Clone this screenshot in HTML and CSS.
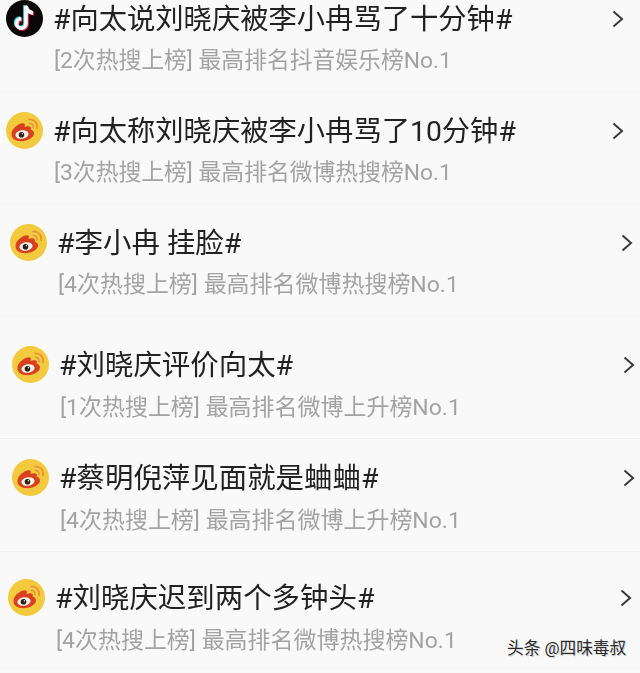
FILE: index.html
```html
<!DOCTYPE html>
<html lang="zh-CN">
<head>
<meta charset="utf-8">
<title>热搜榜</title>
<link rel="stylesheet" href="styles.css">
</head>
<body>
<svg class="defs" width="0" height="0" aria-hidden="true">
  <defs>
    <symbol id="weibo" viewBox="0 0 37 37">
      <circle cx="18.5" cy="18.5" r="18.5" fill="#f3ca3e"/>
      <path d="M5.500 22c0-4 3.400-7.500 7.500-9.700 2.600-1.400 5-1.500 5.700-.2.400.8.200 1.900-.2 2.800 2.400-.9 5-1.100 6 .2.500.8.400 1.700 0 2.500 2 .6 3.500 1.800 3.500 4 0 3.800-6 7.600-12.500 7.600S5.500 26.500 5.500 22z" fill="#d9401f"/>
      <ellipse cx="16" cy="22.500" rx="6.600" ry="4.300" fill="#f7f3ea" transform="rotate(-8 16 22.500)"/>
      <circle cx="15.500" cy="22.700" r="2.800" fill="#2a2018"/>
      <circle cx="16.400" cy="21.800" r=".8" fill="#f7f3ea"/>
      <path d="M23 7.500c5-.5 9 3.500 8 9" fill="none" stroke="#e8913a" stroke-width="1.700" stroke-linecap="round"/>
      <path d="M23.500 11.500c2.500-.2 4 1.800 3.500 4.200" fill="none" stroke="#e8913a" stroke-width="1.500" stroke-linecap="round"/>
    </symbol>
    <symbol id="note" viewBox="0 0 37 37">
      <path d="M20 6v17.500a4.700 4.700 0 1 1-4.700-4.700M20 6c.5 4 3 6.500 7 7" fill="none" stroke-width="3.600"/>
    </symbol>
    <symbol id="chev" viewBox="0 0 12 18">
      <path d="M1.500 1.500l8.500 7.500-8.500 7.500" fill="none" stroke="#3a3a3a" stroke-width="2"/>
    </symbol>
  </defs>
</svg>
<main class="list">
  <section class="row row-1">
    <div class="head">
      <svg class="icon" viewBox="0 0 37 37">
        <circle cx="18.500" cy="18.500" r="18.500" fill="#0b0709"/>
        <use href="#note" class="note-c" x="-1" y="-.8"/>
        <use href="#note" class="note-r" x="1" y=".8"/>
        <use href="#note" class="note-w"/>
      </svg>
      <h2 class="title">#向太说刘晓庆被李小冉骂了十分钟#</h2>
      <svg class="chev"><use href="#chev"/></svg>
    </div>
    <p class="sub">[2次热搜上榜] 最高排名抖音娱乐榜No.1</p>
  </section>
  <section class="row row-2">
    <div class="head">
      <svg class="icon"><use href="#weibo"/></svg>
      <h2 class="title">#向太称刘晓庆被李小冉骂了10分钟#</h2>
      <svg class="chev"><use href="#chev"/></svg>
    </div>
    <p class="sub">[3次热搜上榜] 最高排名微博热搜榜No.1</p>
  </section>
  <section class="row row-3 large">
    <div class="head">
      <svg class="icon"><use href="#weibo"/></svg>
      <h2 class="title">#李小冉 挂脸#</h2>
      <svg class="chev"><use href="#chev"/></svg>
    </div>
    <p class="sub">[4次热搜上榜] 最高排名微博热搜榜No.1</p>
  </section>
  <section class="row row-4 large low">
    <div class="head">
      <svg class="icon"><use href="#weibo"/></svg>
      <h2 class="title">#刘晓庆评价向太#</h2>
      <svg class="chev"><use href="#chev"/></svg>
    </div>
    <p class="sub">[1次热搜上榜] 最高排名微博上升榜No.1</p>
  </section>
  <section class="row row-5 large low">
    <div class="head">
      <svg class="icon"><use href="#weibo"/></svg>
      <h2 class="title">#蔡明倪萍见面就是蛐蛐#</h2>
      <svg class="chev"><use href="#chev"/></svg>
    </div>
    <p class="sub">[4次热搜上榜] 最高排名微博上升榜No.1</p>
  </section>
  <section class="row row-6 large low">
    <div class="head">
      <svg class="icon"><use href="#weibo"/></svg>
      <h2 class="title">#刘晓庆迟到两个多钟头#</h2>
      <svg class="chev"><use href="#chev"/></svg>
    </div>
    <p class="sub">[4次热搜上榜] 最高排名微博热搜榜No.1</p>
  </section>
</main>
<div class="mark">头条 @四味毒叔</div>
</body>
</html>
```
FILE: styles.css
```css
html, body {
  margin: 0;
  height: 673px;
  overflow: hidden;
  background: #f9f9f9;
}
body {
  font-family: "Roboto", "Noto Sans CJK SC", sans-serif;
}
.defs {
  display: block;
  height: 0;
}
.list {
  display: flex;
  flex-direction: column;
  filter: blur(0.4px);
}
.row {
  box-sizing: border-box;
  border-bottom: 1px solid #f1f1f1;
}
.row-1 { height: 92px; padding: 0 16px 0 6px; }
.row-2 { height: 113px; padding: 20px 16px 0 6px; }
.row-3 { height: 112px; padding: 19px 7px 0 10px; }
.row-4 { height: 122px; padding: 29px 5px 0 12px; }
.row-5 { height: 113px; padding: 20px 5px 0 12px; }
.row-6 { height: 116px; padding: 27px 8px 0 8px; }
.head {
  display: flex;
  align-items: center;
  gap: 10px;
  height: 37px;
}
.icon {
  flex: none;
  width: 37px;
  height: 37px;
}
.title {
  flex: 1;
  margin: 1px 0 0;
  font-size: 28.300px;
  font-weight: 400;
  line-height: 37px;
  color: #222;
  white-space: nowrap;
}
.large .title {
  font-size: 28.450px;
}
.chev {
  flex: none;
  width: 12px;
  height: 18px;
}
.sub {
  margin: 9px 0 0 48px;
  font-size: 22.800px;
  line-height: 30px;
  color: #a3a3a3;
  white-space: nowrap;
}
.large .sub {
  font-size: 22.980px;
}
.low .sub {
  margin-top: 10px;
}
.note-c { stroke: #3fe3e6; }
.note-r { stroke: #f0245a; }
.note-w { stroke: #fff; }
.mark {
  position: absolute;
  left: 507px;
  top: 639px;
  font-size: 16.700px;
  line-height: 20px;
  color: #2b2b2b;
  text-shadow: 0 0 2px #fff, 1px 1px 0 #ccc;
  white-space: nowrap;
}
```
